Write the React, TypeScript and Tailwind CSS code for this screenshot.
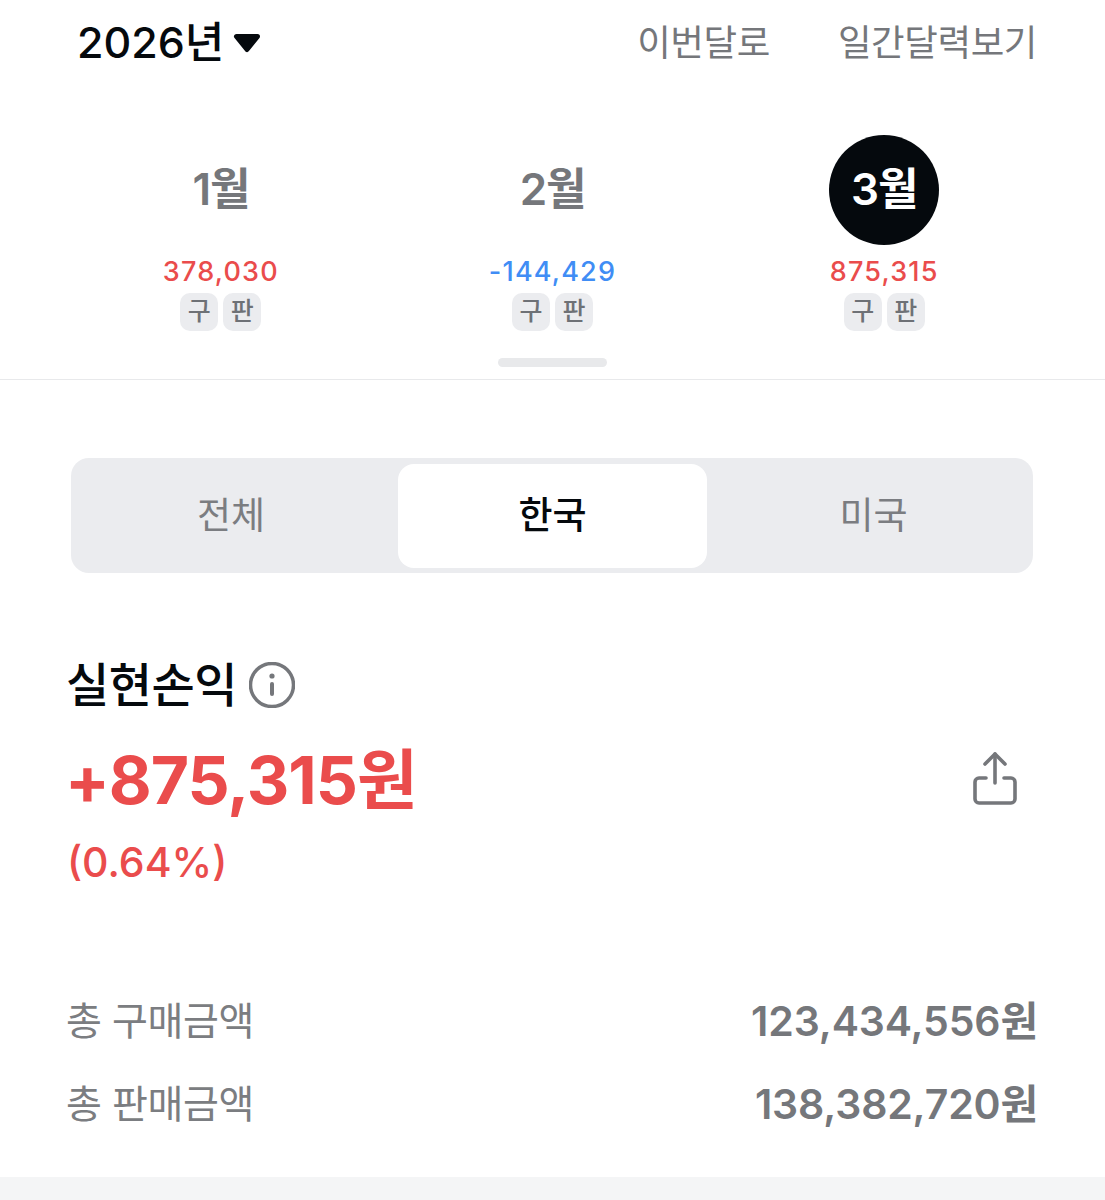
const FONT = "font-['Inter','Noto_Sans_CJK_KR',sans-serif]";

function Month({ label, value, color, active }: { label: string; value: string; color: string; active?: boolean }) {
  return (
    <div className="flex flex-col items-center">
      <div className={`flex h-[110px] w-[110px] items-center justify-center rounded-full pb-[2px] text-[44px] font-semibold tracking-[-1.2px] ${active ? "bg-[#05090d] text-white" : "text-[#75777b]"}`}>
        {label}
      </div>
      <div className={`mt-[11px] h-[32px] text-[27px] leading-[32px] font-medium tracking-[1.2px] ${color}`}>{value}</div>
      <div className="mt-[5px] flex gap-[5px]">
        {["구", "판"].map((t) => (
          <div key={t} className="flex h-[38px] w-[38px] items-center justify-center rounded-[10px] bg-[#ebecef] text-[25px] font-medium text-[#6e7176]">
            {t}
          </div>
        ))}
      </div>
    </div>
  );
}

function Row({ label, value }: { label: string; value: string }) {
  return (
    <div className="flex h-[83px] items-center justify-between">
      <span className="text-[39px] text-[#7b7d81] tracking-[-0.4px]">{label}</span>
      <span className="text-[41px] font-semibold text-[#75777b] tracking-[-0.15px]">{value}</span>
    </div>
  );
}

export default function App() {
  return (
    <div className={`${FONT} flex h-[1200px] w-[1105px] flex-col overflow-hidden bg-white`}>
      <div className="flex h-[85px] items-center justify-between pr-[68px] pl-[77px]">
        <div className="flex items-center gap-[9px] text-[#05090d]">
          <span className="text-[43px] font-medium">2026년</span>
          <svg width="28" height="20" viewBox="0 0 28 20">
            <path d="M3.5 3.5h21L14 16.5z" fill="#05090d" stroke="#05090d" strokeWidth="5" strokeLinejoin="round" />
          </svg>
        </div>
        <div className="flex gap-[68px] pt-[2px] text-[36.5px] text-[#75777b] tracking-[-0.4px]">
          <span>이번달로</span>
          <span>일간달력보기</span>
        </div>
      </div>
      <div className="grid grid-cols-3 px-[55px] pt-[50px]">
        <Month label="1월" value="378,030" color="text-[#ea4c4c]" />
        <Month label="2월" value="-144,429" color="text-[#408df5]" />
        <Month label="3월" value="875,315" color="text-[#ea4c4c]" active />
      </div>
      <div className="mt-[27px] flex justify-center">
        <div className="h-[9px] w-[109px] rounded-full bg-[#e8e9eb]" />
      </div>
      <div className="mt-[12px] h-px bg-[#e8e9eb]" />

      <div className="mx-[71px] mt-[78px] mr-[72px] grid h-[115px] grid-cols-[322px_309px_1fr] items-center rounded-[18px] bg-[#ebecef] p-[5px] pt-[6px] text-[37px]">
        <div className="pr-[12px] text-center text-[#7b7d81]">전체</div>
        <div className="flex h-[104px] items-center justify-center rounded-[16px] bg-white font-medium text-[#05090d]">한국</div>
        <div className="pl-[12px] text-center text-[#7b7d81]">미국</div>
      </div>

      <div className="mt-[80px] flex h-[64px] items-center gap-[12px] pl-[66px]">
        <span className="text-[47px] font-medium tracking-[-0.5px] text-[#05090d]">실현손익</span>
        <svg width="46" height="46" viewBox="0 0 46 46" fill="none">
          <circle cx="23" cy="23" r="21.5" stroke="#75777b" strokeWidth="3.5" />
          <circle cx="23" cy="14" r="2.6" fill="#75777b" />
          <rect x="21" y="20" width="4" height="14" rx="2" fill="#75777b" />
        </svg>
      </div>
      <div className="mt-[21px] flex items-center justify-between pr-[88px] pl-[65px]">
        <span className="text-[66px] leading-[84px] font-bold tracking-[-1px] text-[#ea4c4c]">+875,315원</span>
        <svg className="mb-[4px]" width="44" height="53" viewBox="0 0 44 53" fill="none" stroke="#75777b" strokeWidth="3.6" strokeLinecap="round" strokeLinejoin="round">
          <path d="M22 2V31" />
          <path d="M12 12 22 2 32 12" />
          <path d="M13 26H6a4 4 0 0 0-4 4v17a4 4 0 0 0 4 4h32a4 4 0 0 0 4-4V30a4 4 0 0 0-4-4h-7" />
        </svg>
      </div>
      <div className="mt-[15px] pl-[67px] text-[41px] leading-[50px] font-medium text-[#ea4c4c]">(0.64%)</div>

      <div className="mt-[93px] flex flex-col pr-[67px] pl-[66px]">
        <Row label="총 구매금액" value="123,434,556원" />
        <Row label="총 판매금액" value="138,382,720원" />
      </div>
      <div className="mt-[31px] min-h-0 flex-1 bg-[#f4f5f6]" />
    </div>
  );
}
